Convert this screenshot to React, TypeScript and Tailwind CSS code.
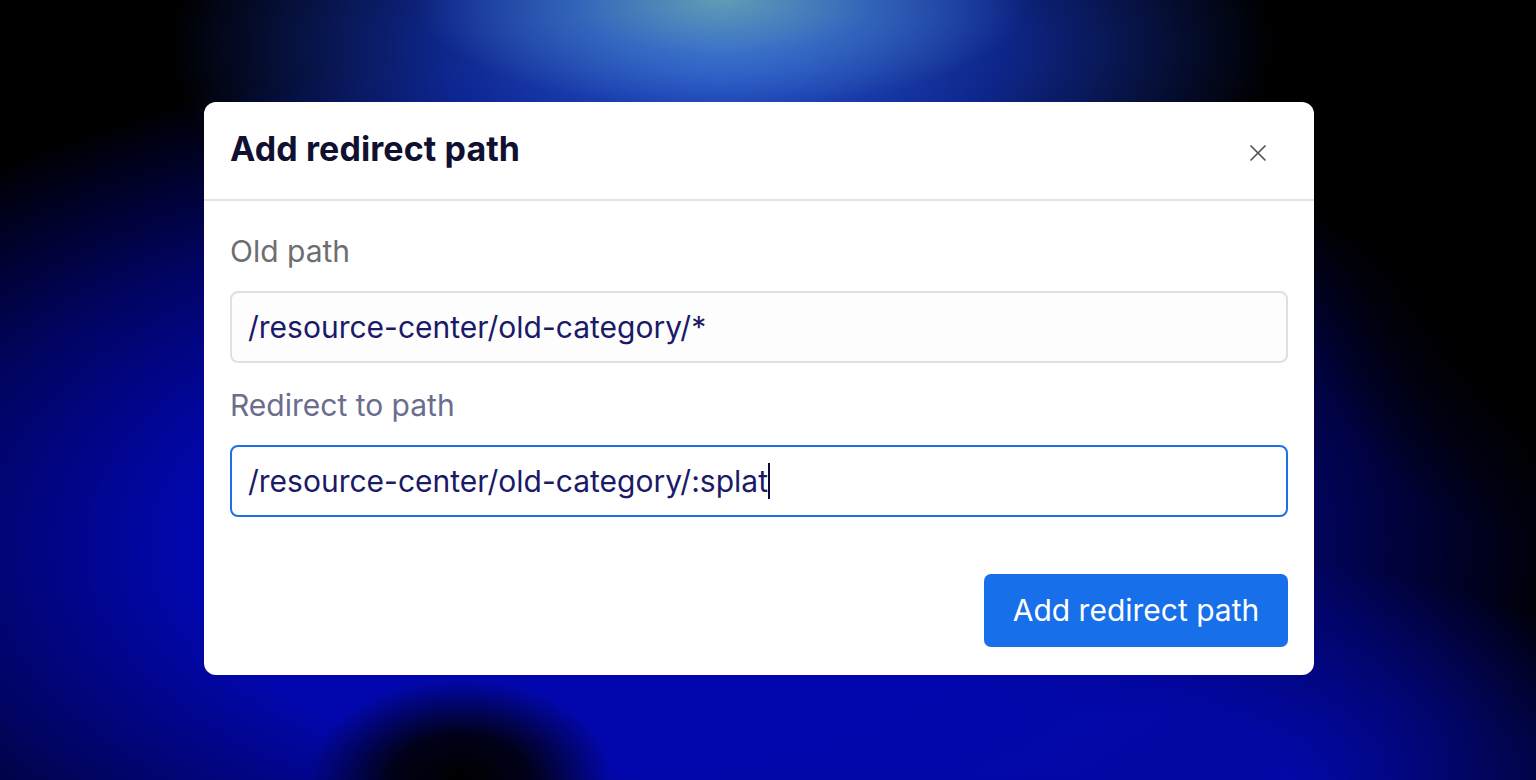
import React from 'react';
import { X } from 'lucide-react';

const App = () => {
  return (
    <div
      className="min-h-screen w-full overflow-hidden bg-black bg-[image:radial-gradient(ellipse_10%_13%_at_30%_100%,#000_0%,rgba(0,0,0,0.85)_45%,transparent_100%),radial-gradient(ellipse_15%_34%_at_100%_35%,#000_35%,transparent_100%),radial-gradient(ellipse_20%_14%_at_47%_0%,rgba(105,165,180,0.9)_0%,rgba(70,130,200,0.55)_50%,transparent_100%),radial-gradient(ellipse_36%_32%_at_47%_6%,#2a5cd0_0%,rgba(20,55,200,0.7)_50%,transparent_100%),radial-gradient(ellipse_62%_64%_at_40%_70%,#0207ad_45%,rgba(2,6,160,0.6)_72%,transparent_100%),radial-gradient(ellipse_40%_30%_at_72%_100%,#0309a8_30%,transparent_100%)] font-['Inter',sans-serif]"
    >
      <div className="pt-[102px] pl-[204px]">
        <div className="w-[1110px] rounded-[12px] bg-white overflow-hidden">
          {/* Header */}
          <div className="h-[99px] flex items-center justify-between pl-[26px] pr-[38px] border-b-2 border-[#e2e2e6]">
            <h2 className="text-[34px] font-bold text-[#101030] tracking-[0.1px] -mt-[4px]">Add redirect path</h2>
            <button className="text-[#555] p-1 mt-[4px]">
              <X className="w-[28px] h-[28px]" strokeWidth={1.5} />
            </button>
          </div>

          {/* Body */}
          <div className="px-[26px] pt-[31px] pb-[28px]">
            <label className="block text-[30px] leading-[38px] text-[#6e6e70]">Old path</label>
            <div className="mt-[21px] h-[72px] flex items-center px-[16px] rounded-[8px] border-2 border-[#e0e0e2] bg-[#fdfdfd]">
              <span className="text-[30px] text-[#1a1a68]">/resource-center/old-category/*</span>
            </div>

            <label className="block mt-[23px] text-[30px] leading-[38px] text-[#6a6d8e]">Redirect to path</label>
            <div className="mt-[21px] h-[72px] flex items-center px-[16px] rounded-[8px] border-2 border-[#1f6fe5] bg-white">
              <span className="text-[30px] text-[#1a1a68]">/resource-center/old-category/:splat</span>
              <span className="w-[2px] h-[36px] bg-[#0a0a40]" />
            </div>

            <div className="mt-[57px] flex justify-end">
              <button className="h-[73px] w-[304px] rounded-[7px] bg-[#176fea] text-white text-[30px]">
                Add redirect path
              </button>
            </div>
          </div>
        </div>
      </div>
    </div>
  );
};

export default App;
